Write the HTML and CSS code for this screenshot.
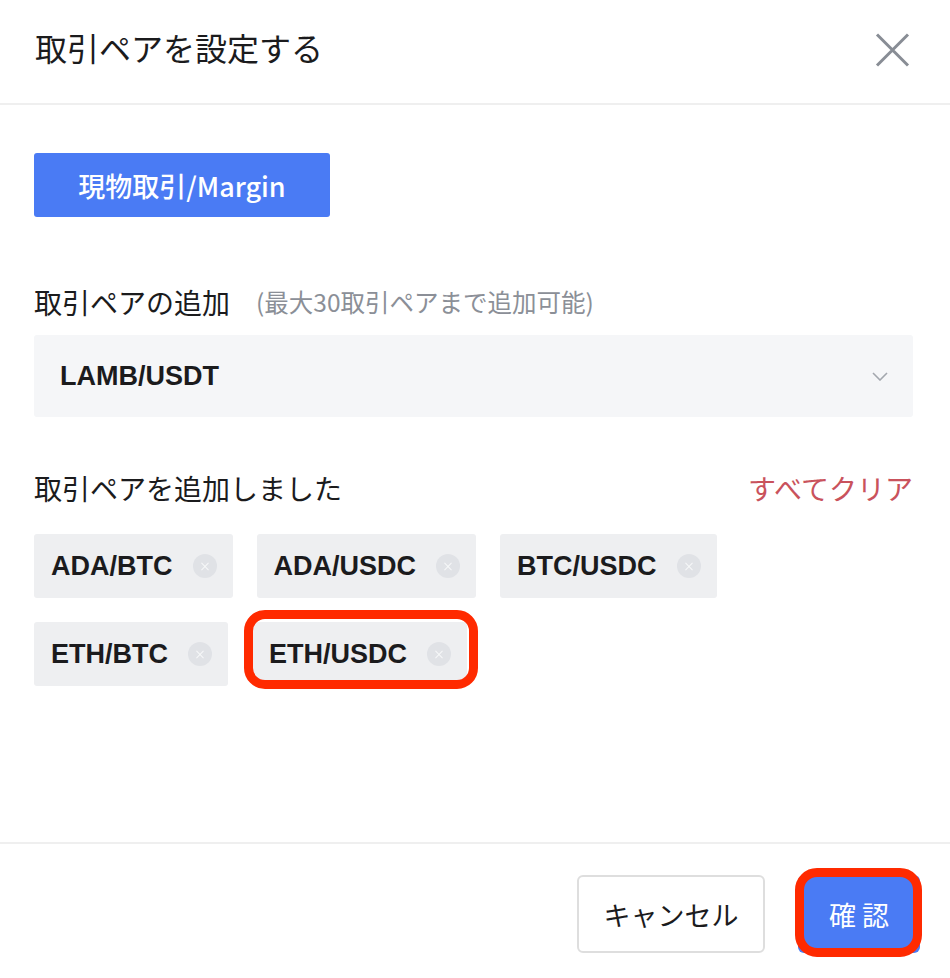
FILE: index.html
```html
<!DOCTYPE html>
<html lang="ja">
<head>
    <meta charset="UTF-8">
    <meta name="viewport" content="width=device-width, initial-scale=1.0">
    <title>取引ペアを設定する</title>
    <link rel="stylesheet" href="styles.css">
</head>
<body>
    <div class="modal">
        <div class="modal-header">
            <h1 class="modal-title">取引ペアを設定する</h1>
            <button class="close-btn" aria-label="閉じる">
                <svg width="35" height="34" viewBox="0 0 35 34"><path d="M2 1.5 L33 32.5 M33 1.5 L2 32.5" stroke="#888d95" stroke-width="3" fill="none"/></svg>
            </button>
        </div>

        <div class="modal-body">
            <button class="market-btn">現物取引/Margin</button>

            <div class="field-label">
                <span>取引ペアの追加</span>
                <span class="hint">(最大30取引ペアまで追加可能)</span>
            </div>
            <div class="select-box">
                <span>LAMB/USDT</span>
                <svg width="16" height="9" viewBox="0 0 16 9"><path d="M1 1 L8 8 L15 1" stroke="#a3a7ae" stroke-width="1.6" fill="none"/></svg>
            </div>

            <div class="added-header">
                <span>取引ペアを追加しました</span>
                <a class="clear-all">すべてクリア</a>
            </div>
            <div class="tag-list">
                <div class="tag">ADA/BTC<span class="tag-x"></span></div>
                <div class="tag">ADA/USDC<span class="tag-x"></span></div>
                <div class="tag">BTC/USDC<span class="tag-x"></span></div>
                <div class="tag">ETH/BTC<span class="tag-x"></span></div>
                <div class="tag marked">ETH/USDC<span class="tag-x"></span></div>
            </div>
        </div>

        <div class="modal-footer">
            <button class="btn btn-cancel">キャンセル</button>
            <button class="btn btn-ok">確 認</button>
        </div>
    </div>
</body>
</html>
```

FILE: styles.css
```css
body { margin: 0; background: #fff; font-family: "Liberation Sans", "Noto Sans CJK JP", sans-serif; color: #1b1b1d; }
.modal { width: 950px; height: 978px; display: flex; flex-direction: column; }

/* en-tete */
.modal-header { height: 103px; box-sizing: content-box; border-bottom: 2px solid #efefef; display: flex; justify-content: space-between; align-items: flex-start; padding: 0 40px 0 35px; }
.modal-title { margin: 27px 0 0; font-size: 32px; font-weight: 400; line-height: 40px; font-family: "Noto Sans CJK JP", sans-serif; }
.close-btn { border: 0; background: none; padding: 0; margin-top: 33px; width: 35px; height: 34px; display: flex; }

/* corps */
.modal-body { flex: 1; padding: 48px 37px 0 34px; }
.market-btn { display: block; height: 64px; width: 296px; border: 0; border-radius: 3px; background: #4a7bf4; color: #fff; font-family: "Noto Sans CJK JP", sans-serif; font-size: 27px; font-weight: 500; }

.field-label { margin-top: 65px; line-height: 40px; font-size: 28px; display: flex; align-items: center; gap: 26px; font-family: "Noto Sans CJK JP", sans-serif; }
.hint { font-size: 24.5px; color: #8b8f97; }

.select-box { margin-top: 13px; height: 82px; background: #f5f6f8; border-radius: 3px; display: flex; align-items: center; justify-content: space-between; padding: 0 25px 0 26px; font-size: 27px; font-weight: bold; }

.added-header { margin-top: 51px; line-height: 40px; font-size: 28px; display: flex; justify-content: space-between; font-family: "Noto Sans CJK JP", sans-serif; }
.clear-all { color: #c9525c; cursor: pointer; }

.tag-list { margin-top: 26px; display: flex; flex-wrap: wrap; gap: 24px; width: 720px; }
.tag { position: relative; height: 64px; box-sizing: border-box; display: flex; align-items: center; padding: 0 16px 0 17px; background: #eeeff1; border-radius: 3px; font-size: 27px; font-weight: bold; }
.tag-x { width: 24px; height: 24px; margin-left: 20px; border-radius: 50%; background: #e0e2e6; position: relative; }
.tag-x::before, .tag-x::after { content: ""; position: absolute; left: 7px; top: 11.5px; width: 10px; height: 1px; background: #f7f8f9; transform: rotate(45deg); }
.tag-x::after { transform: rotate(-45deg); }

/* annotation rouge */
.marked::after { content: ""; position: absolute; left: -8px; right: -11px; top: -12px; bottom: -3px; border: 9px solid #ff2a00; border-radius: 21px; }

/* pied */
.modal-footer { border-top: 2px solid #efefef; padding: 31px 30px 25px; display: flex; justify-content: flex-end; gap: 33px; }
.btn { height: 78px; border-radius: 6px; font-family: "Noto Sans CJK JP", sans-serif; font-size: 27px; }
.btn-cancel { width: 188px; background: #fff; border: 2px solid #dedede; color: #1b1b1d; }
.btn-ok { position: relative; width: 122px; background: #4a7bf4; border: 0; color: #fff; }
.btn-ok::after { content: ""; position: absolute; left: -3px; right: -2px; top: -7px; bottom: -4px; border: 9px solid #ff2a00; border-radius: 22px; }
```
